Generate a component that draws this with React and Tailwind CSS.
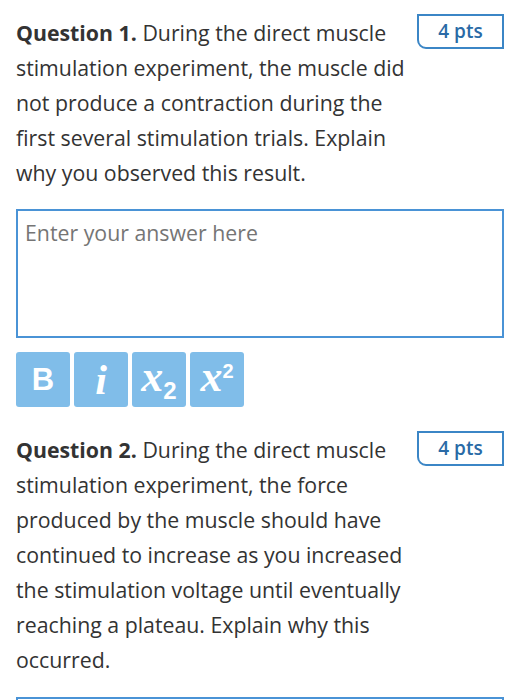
import React from 'react';

const Badge = ({ pts }) => (
  <div className="w-[87px] h-[35px] shrink-0 border-2 border-[#3b86c6] rounded-bl-[9px] flex items-center justify-center text-[19px] font-semibold text-[#2a6aa6]">
    {pts} pts
  </div>
);

const Question = ({ num, text, className = '' }) => (
  <div className={`flex items-start justify-between ${className}`}>
    <p className="w-[400px] text-[21.3px] leading-[35px] text-[#333333]">
      <span className="font-bold">Question {num}.</span> {text}
    </p>
    <div className="mt-[-1px]">
      <Badge pts={4} />
    </div>
  </div>
);

const ToolButton = ({ children }) => (
  <button className="w-[54px] h-[55px] rounded-[3px] bg-[#80bde9] text-white flex items-center justify-center">
    {children}
  </button>
);

export default function App() {
  return (
    <div className="bg-white h-[700px] pl-[16px] pr-[1px] pt-[15px] overflow-hidden font-['Open_Sans',sans-serif]">
      <Question
        num={1}
        text="During the direct muscle stimulation experiment, the muscle did not produce a contraction during the first several stimulation trials. Explain why you observed this result."
      />

      <div className="mt-[19px] h-[129px] border-2 border-[#4a93d6] pl-[7px] pt-[8px]">
        <span className="text-[21.3px] leading-[28px] text-[#757575]">Enter your answer here</span>
      </div>

      <div className="mt-[14px] flex gap-[4px]">
        <ToolButton>
          <span className="font-['Liberation_Sans',sans-serif] font-bold text-[31px] leading-none">B</span>
        </ToolButton>
        <ToolButton>
          <span className="font-['Liberation_Serif',serif] italic font-bold text-[42px] leading-none">i</span>
        </ToolButton>
        <ToolButton>
          <span className="font-['Liberation_Serif',serif] italic font-bold text-[44px] leading-none mt-[-6px]">x</span>
          <span className="font-['Liberation_Sans',sans-serif] font-bold text-[24px] leading-none mt-[22px]">2</span>
        </ToolButton>
        <ToolButton>
          <span className="font-['Liberation_Serif',serif] italic font-bold text-[44px] leading-none mt-[-6px]">x</span>
          <span className="font-['Liberation_Sans',sans-serif] font-bold text-[20px] leading-none mb-[18px]">2</span>
        </ToolButton>
      </div>

      <Question
        className="mt-[25px]"
        num={2}
        text="During the direct muscle stimulation experiment, the force produced by the muscle should have continued to increase as you increased the stimulation voltage until eventually reaching a plateau. Explain why this occurred."
      />

      <div className="mt-[20px] h-[129px] border-2 border-[#4a93d6]" />
    </div>
  );
}
